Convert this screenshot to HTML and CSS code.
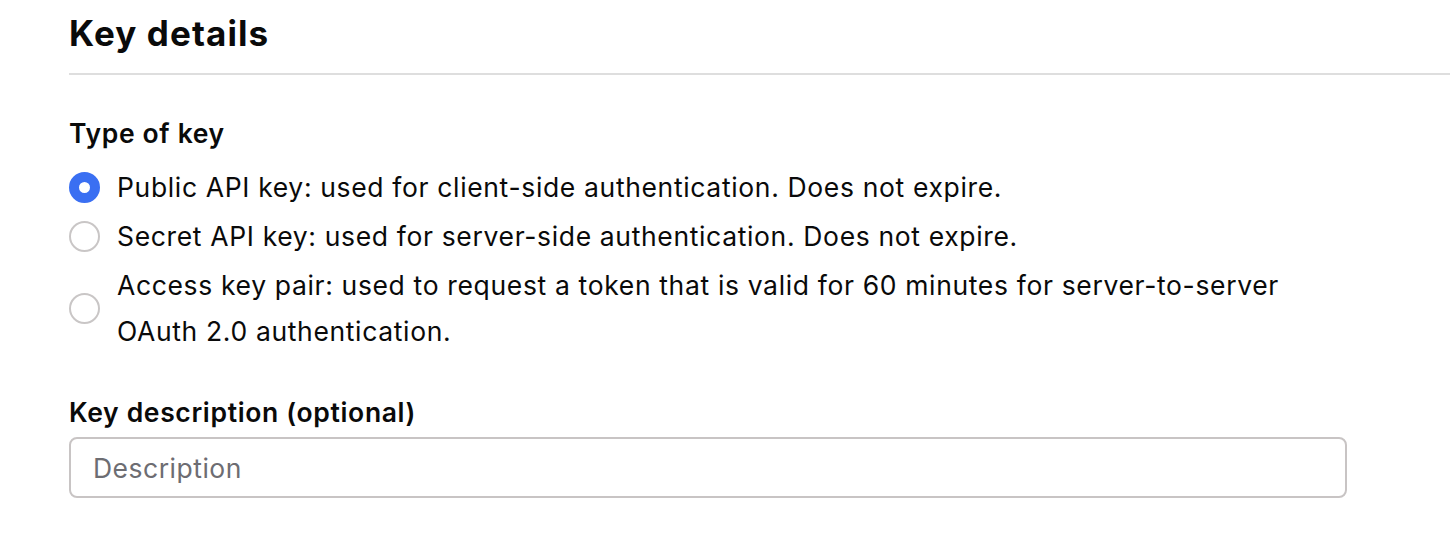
FILE: index.html
```html
<!DOCTYPE html>
<html lang="en">
<head>
<meta charset="utf-8">
<title>Key details</title>
<link rel="stylesheet" href="styles.css">
</head>
<body>
<main class="page">
  <h1 class="title">Key details</h1>
  <form class="form">
    <fieldset class="group">
      <legend class="label">Type of key</legend>
      <label class="option">
        <input type="radio" name="type" class="radio" checked>
        <span class="option-text">Public API key: used for client-side authentication. Does not expire.</span>
      </label>
      <label class="option">
        <input type="radio" name="type" class="radio">
        <span class="option-text">Secret API key: used for server-side authentication. Does not expire.</span>
      </label>
      <label class="option">
        <input type="radio" name="type" class="radio">
        <span class="option-text">Access key pair: used to request a token that is valid for 60 minutes for server-to-server OAuth 2.0 authentication.</span>
      </label>
    </fieldset>
    <div class="field">
      <label class="label" for="desc">Key description (optional)</label>
      <input id="desc" class="input" type="text" placeholder="Description">
    </div>
  </form>
</main>
</body>
</html>
```

FILE: styles.css
```css
html, body {
  margin: 0;
  padding: 0;
  background: #ffffff;
}
body {
  font-family: Inter, "Noto Sans", "Liberation Sans", sans-serif;
  color: #0a0a0a;
}
.page {
  padding-left: 69px;
  padding-top: 11px;
}
.title {
  margin: 0;
  font-size: 35px;
  line-height: 44px;
  font-weight: 700;
  letter-spacing: 1.1px;
  padding-bottom: 18px;
  border-bottom: 2px solid #dedede;
}
.form {
  width: 1278px;
  padding-top: 42px;
}
.group {
  border: 0;
  margin: 0;
  padding: 0;
  display: flex;
  flex-direction: column;
  gap: 3px;
}
.label {
  display: block;
  padding: 0;
  font-size: 26.5px;
  line-height: 32px;
  font-weight: 600;
  letter-spacing: 0.65px;
  margin-bottom: 15px;
}
.option {
  display: flex;
  align-items: center;
  gap: 17px;
  font-size: 26.5px;
  letter-spacing: 0.65px;
  line-height: 46px;
}
.option-text {
  max-width: 1195px;
}
.radio {
  appearance: none;
  -webkit-appearance: none;
  margin: 0;
  flex: 0 0 auto;
  width: 31px;
  height: 31px;
  border-radius: 50%;
  border: 2px solid #c9c6c6;
  background: #ffffff;
  box-sizing: border-box;
}
.radio:checked {
  border: 10.5px solid #3a6ff2;
  background: #ffffff;
}
.field {
  margin-top: 42px;
}
.field .label {
  margin-bottom: 9px;
}
.input {
  display: block;
  width: 100%;
  box-sizing: border-box;
  height: 61px;
  border: 2px solid #c8c4c4;
  border-radius: 8px;
  padding: 0 22px;
  font-family: inherit;
  font-size: 26.5px;
  letter-spacing: 0.5px;
  color: #0a0a0a;
  outline: none;
}
.input::placeholder {
  color: #6d6d72;
}
```
